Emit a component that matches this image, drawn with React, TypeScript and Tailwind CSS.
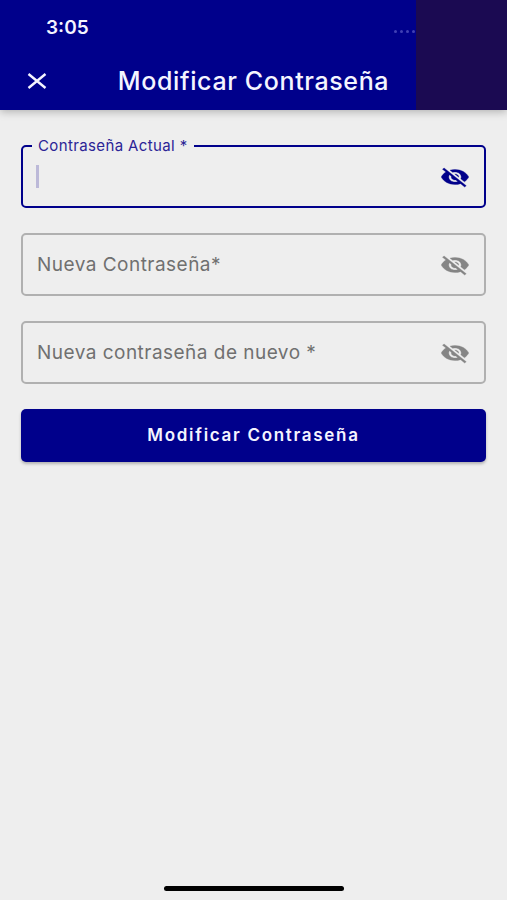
type PasswordFieldProps = {
  id: string;
  label: string;
  active?: boolean;
};

function EyeOffIcon() {
  return (
    <svg
      viewBox="0 0 24 24"
      preserveAspectRatio="none"
      className="h-6 w-[30px]"
      fill="currentColor"
      stroke="currentColor"
      strokeWidth="0.3"
      aria-hidden="true"
    >
      <path d="M12 7c2.76 0 5 2.24 5 5 0 .65-.13 1.26-.36 1.83l2.92 2.92c1.51-1.26 2.7-2.89 3.43-4.75-1.73-4.39-6-7.5-11-7.5-1.4 0-2.74.25-3.98.7l2.16 2.16C10.74 7.13 11.35 7 12 7zM2 4.27l2.28 2.28.46.46C3.08 8.3 1.78 10.02 1 12c1.73 4.39 6 7.5 11 7.5 1.55 0 3.03-.3 4.38-.84l.42.42L19.73 22 21 20.73 3.27 3 2 4.27zM7.53 9.8l1.55 1.55c-.05.21-.08.43-.08.65 0 1.66 1.34 3 3 3 .22 0 .44-.03.65-.08l1.55 1.55c-.67.33-1.41.53-2.2.53-2.76 0-5-2.24-5-5 0-.79.2-1.53.53-2.2zm4.31-.78l3.15 3.15.02-.16c0-1.66-1.34-3-3-3l-.17.01z" />
    </svg>
  );
}

function PasswordField({ id, label, active = false }: PasswordFieldProps) {
  return (
    <div
      className={
        active
          ? "relative flex h-[63px] items-center rounded-[5px] border-2 border-[#00008b] pr-[14px] pl-[13px] text-[#00008b]"
          : "relative flex h-[63px] items-center rounded-[5px] border-2 border-[#b0b0b0] pr-[14px] pl-[13px] text-[#858585]"
      }
    >
      <label
        htmlFor={id}
        className={
          active
            ? "pointer-events-none absolute -top-[11px] left-[9px] bg-[#eeeeee] px-[6px] text-[15px] leading-5 tracking-wide text-[#2b2496]"
            : "pointer-events-none absolute top-[18px] left-[14px] text-[19px] leading-6 tracking-wide text-[#707070]"
        }
      >
        {label}
      </label>
      {active && <span className="h-[23px] w-[3px] bg-[#bcb9d8]" />}
      <input
        id={id}
        type="password"
        className="h-full min-w-0 flex-1 bg-transparent text-[19px] caret-[#00008b] outline-none"
      />
      <button type="button" aria-label="Mostrar contraseña">
        <EyeOffIcon />
      </button>
    </div>
  );
}

export default function App() {
  return (
    <div className="flex min-h-screen flex-col bg-[#eeeeee] font-['Inter','Liberation_Sans',sans-serif]">
      <header className="relative bg-[#00008b] text-[#f4f4ff] shadow-[0_2px_8px_rgba(0,0,0,0.25)]">
        <div className="flex h-[52px] items-center justify-between pt-[3px] pr-[92px] pl-[46px]">
          <span className="text-[19px] leading-6 font-semibold">3:05</span>
          <span className="flex gap-[3px] pt-2">
            <span className="size-[3px] rounded-full bg-[#4040b4]" />
            <span className="size-[3px] rounded-full bg-[#4040b4]" />
            <span className="size-[3px] rounded-full bg-[#4040b4]" />
            <span className="size-[3px] rounded-full bg-[#4040b4]" />
          </span>
        </div>
        <div className="grid h-[58px] grid-cols-[58px_1fr_58px] items-center">
          <button type="button" aria-label="Cerrar" className="flex justify-end pr-[11px]">
            <svg viewBox="0 0 20 18" className="h-[18px] w-5" fill="none" stroke="currentColor" strokeWidth="2.4" aria-hidden="true">
              <path d="M1.5 2 18.5 16M18.5 2 1.5 16" />
            </svg>
          </button>
          <h1 className="text-center text-[25px] leading-8 font-medium tracking-wide whitespace-nowrap">
            Modificar Contraseña
          </h1>
        </div>
        <div className="absolute inset-y-0 right-0 w-[91px] bg-[#1b0a52]" />
      </header>

      <form className="flex flex-col gap-[25px] px-[21px] pt-[35px]">
        <PasswordField id="actual" label="Contraseña Actual *" active />
        <PasswordField id="nueva" label="Nueva Contraseña*" />
        <PasswordField id="repetir" label="Nueva contraseña de nuevo *" />
        <button
          type="button"
          className="h-[53px] rounded-[5px] bg-[#00008b] text-[17px] font-semibold tracking-widest text-[#f4f4ff] shadow-[0_2px_3px_rgba(0,0,0,0.25)]"
        >
          Modificar Contraseña
        </button>
      </form>

      <div className="mt-auto flex justify-center pb-[9px]">
        <div className="h-[5px] w-[180px] rounded-full bg-black" />
      </div>
    </div>
  );
}
